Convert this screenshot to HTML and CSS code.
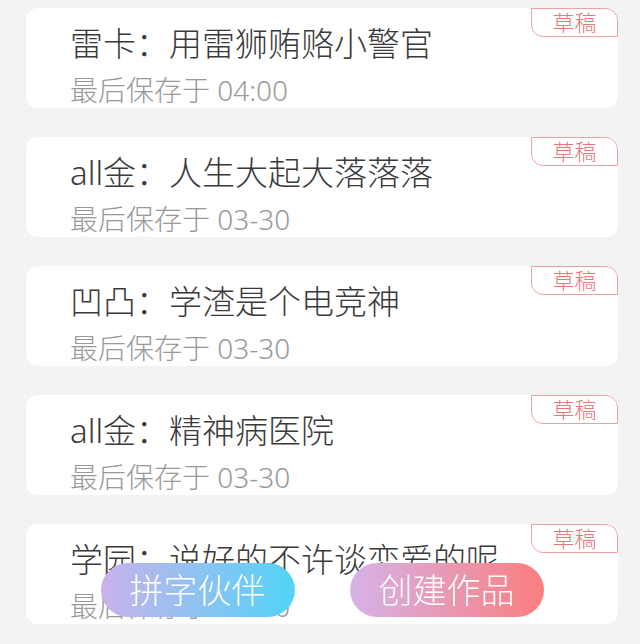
FILE: index.html
```html
<!DOCTYPE html>
<html lang="zh-CN">
<head>
    <meta charset="utf-8">
    <title>我的草稿</title>
    <link rel="stylesheet" href="styles.css">
</head>
<body>
    <div class="list">
        <div class="card">
            <span class="badge">草稿</span>
            <p class="title">雷卡：用雷狮贿赂小警官</p>
            <p class="time">最后保存于 04:00</p>
        </div>
        <div class="card">
            <span class="badge">草稿</span>
            <p class="title">all金：人生大起大落落落</p>
            <p class="time">最后保存于 03-30</p>
        </div>
        <div class="card">
            <span class="badge">草稿</span>
            <p class="title">凹凸：学渣是个电竞神</p>
            <p class="time">最后保存于 03-30</p>
        </div>
        <div class="card">
            <span class="badge">草稿</span>
            <p class="title">all金：精神病医院</p>
            <p class="time">最后保存于 03-30</p>
        </div>
        <div class="card">
            <span class="badge">草稿</span>
            <p class="title">学园：说好的不许谈恋爱的呢</p>
            <p class="time">最后保存于 03-30</p>
        </div>
    </div>
    <div class="actions">
        <button class="btn btn-partner">拼字伙伴</button>
        <button class="btn btn-create">创建作品</button>
    </div>
</body>
</html>
```

FILE: styles.css
```css
*{margin:0;padding:0;box-sizing:border-box;}
html,body{height:100%;overflow:hidden;}
body{background:#f3f3f3;font-family:"Noto Sans","Noto Sans CJK SC",sans-serif;font-weight:300;}

.list{display:flex;flex-direction:column;gap:29px;padding:8px 22px 0 26px;}
.card{position:relative;height:100px;padding:13px 0 0 44px;background:#fff;border-radius:12px;overflow:hidden;}
.title{font-size:33px;line-height:46px;color:#3a3a3a;white-space:nowrap;}
.time{margin-top:3px;font-size:28px;line-height:40px;color:#999;white-space:nowrap;}
.badge{position:absolute;top:0;right:0;width:87px;height:29px;border:1px solid #eca2a2;border-radius:0 12px 0 12px;color:#ea7676;font-size:22px;line-height:27px;text-align:center;}

.actions{position:fixed;left:0;right:0;bottom:27px;display:flex;justify-content:center;gap:55px;padding-left:4px;}
.btn{width:194px;height:54px;border:0;border-radius:27px;color:#fff;font-family:inherit;font-weight:300;font-size:34px;line-height:54px;}
.btn-partner{background:linear-gradient(90deg,#cab2ec,#52d3f7);}
.btn-create{background:linear-gradient(90deg,#d5b3e8,#fb7e7e);}
```
